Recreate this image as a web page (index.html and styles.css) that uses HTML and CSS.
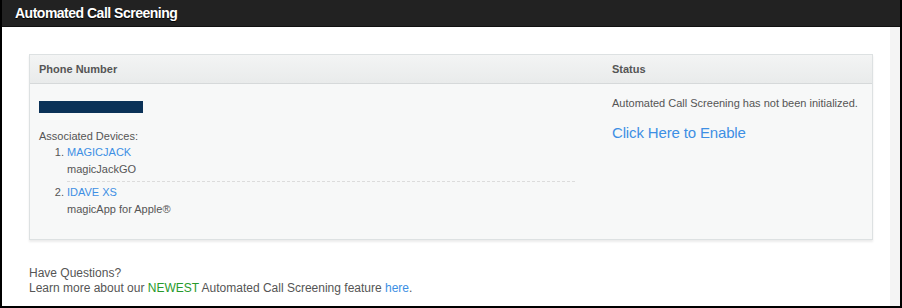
FILE: index.html
```html
<!DOCTYPE html>
<html lang="en">
<head>
    <meta charset="UTF-8">
    <title>Automated Call Screening</title>
    <link rel="stylesheet" href="styles.css">
</head>
<body>
<div class="frame">
    <div class="title-bar">Automated Call Screening</div>

    <div class="content">
        <div class="panel">
            <div class="panel-head">
                <div class="col-phone">Phone Number</div>
                <div class="col-status">Status</div>
            </div>
            <div class="panel-body">
                <div class="col-phone">
                    <div class="number"><span class="redacted"></span></div>
                    <div class="devices-label">Associated Devices:</div>
                    <ol class="devices">
                        <li>
                            <a href="#">MAGICJACK</a>
                            <div class="device-type">magicJackGO</div>
                        </li>
                        <li>
                            <a href="#">IDAVE XS</a>
                            <div class="device-type">magicApp for Apple&reg;</div>
                        </li>
                    </ol>
                </div>
                <div class="col-status">
                    <div class="status-text">Automated Call Screening has not been initialized.</div>
                    <a href="#" class="enable-link">Click Here to Enable</a>
                </div>
            </div>
        </div>

        <div class="questions">
            Have Questions?<br>
            Learn more about our <span class="newest">NEWEST</span> Automated Call Screening feature <a href="#">here</a>.
        </div>
    </div>
</div>
</body>
</html>
```

FILE: styles.css
```css
html, body {
    margin: 0;
    padding: 0;
    background: #000;
}
body {
    font-family: "Liberation Sans", Arial, Helvetica, sans-serif;
    font-size: 12px;
    color: #555;
}
a {
    color: #3d8fe4;
    text-decoration: none;
}
.frame {
    width: 898px;
    height: 306px;
    margin-left: 2px;
    background: #f4f4f4;
    display: flex;
    flex-direction: column;
}
.title-bar {
    height: 26px;
    line-height: 26px;
    background: #222;
    color: #fff;
    font-weight: bold;
    font-size: 14px;
    letter-spacing: -0.5px;
    padding-left: 13px;
    border-bottom: 1px solid #111;
    text-shadow: 0 1px 1px #000;
}
.content {
    flex: 1;
    width: 888px;
    background: #fff;
    padding: 27px 0 0 27px;
    box-sizing: border-box;
}
.panel {
    width: 844px;
    height: 186px;
    box-sizing: border-box;
    background: #f7f8f8;
    border: 1px solid #dde1e2;
    box-shadow: 0 2px 2px rgba(0,0,0,0.08);
    font-size: 11px;
}
.panel-head {
    display: flex;
    height: 28px;
    line-height: 28px;
    background: linear-gradient(#f3f4f4, #e9ebeb);
    border-bottom: 1px solid #d6d9da;
    font-weight: bold;
    color: #555;
}
.col-phone {
    width: 572px;
    padding-left: 9px;
    box-sizing: border-box;
}
.col-status {
    flex: 1;
    padding-left: 10px;
    white-space: nowrap;
}
.panel-body {
    display: flex;
    line-height: 16px;
}
.panel-body .col-phone {
    padding-top: 17px;
}
.panel-body .col-status {
    padding-top: 11px;
}
.number {
    height: 12px;
}
.redacted {
    display: inline-block;
    width: 104px;
    height: 12px;
    background: #0a3157;
    vertical-align: top;
}
.devices-label {
    margin-top: 15px;
}
.devices {
    margin: 0;
    padding-left: 28px;
    width: 508px;
}
.devices li {
    padding-bottom: 4px;
}
.devices li + li {
    border-top: 1px dashed #dcdcdc;
    padding-top: 2px;
}
.device-type {
    margin-top: 1px;
}
.enable-link {
    display: inline-block;
    margin-top: 13px;
    font-size: 15px;
    line-height: 18px;
    letter-spacing: -0.15px;
}
.questions {
    margin-top: 26px;
    line-height: 15px;
}
.newest {
    color: #279a2c;
}
```
